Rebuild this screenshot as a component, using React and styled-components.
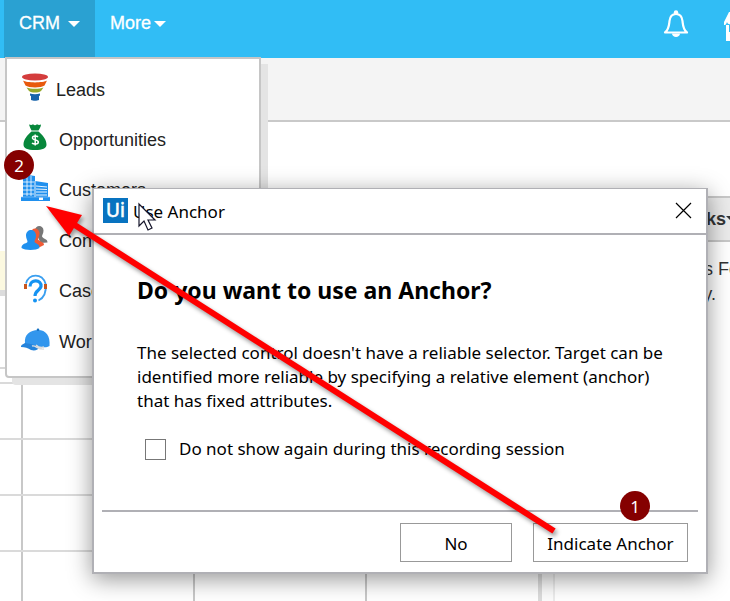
import React from "react";
import styled, { createGlobalStyle } from "styled-components";

const GlobalStyle = createGlobalStyle`
  * { box-sizing: border-box; }
  body {
    margin: 0;
    background: #fff;
    color: #222;
    font-family: "Liberation Sans", Arial, sans-serif;
    font-size: 18px;
  }
  button, input { font: inherit; color: inherit; margin: 0; }
`;

const Page = styled.div`
  position: relative;
  height: 100vh;
  overflow: hidden;
  display: flex;
  flex-direction: column;
`;

const TopBar = styled.header`
  flex: none;
  display: flex;
  height: 58px;
  padding-left: 4px;
  background: #31bdf5;
`;

const NavButton = styled.button`
  display: flex;
  align-items: center;
  gap: ${(p) => (p.$active ? 8 : 3)}px;
  height: 58px;
  padding: 0 15px 11px;
  border: 0;
  background: ${(p) => (p.$active ? "#2aa1d2" : "transparent")};
  color: #fff;
  -webkit-text-stroke: 0.3px #fff;
`;

const Caret = styled.span`
  border: 6px solid transparent;
  border-top-color: currentColor;
  border-bottom: 0;
`;

const TopIcons = styled.div`
  flex: none;
  display: flex;
  gap: 34px;
  margin-left: auto;
  margin-right: -22px;
  padding-top: 9px;
`;

const IconButton = styled.button`
  width: 28px;
  height: 32px;
  padding: 0;
  border: 0;
  background: none;
`;

const SubBar = styled.div`
  flex: none;
  height: 64px;
  border-bottom: 2px solid #c9c9c9;
  background: #f4f4f4;
`;

const Content = styled.main`
  flex: 1;
  display: flex;
  min-height: 0;
`;

const ListPane = styled.section`
  flex: 1;
  min-width: 0;
  overflow: hidden;
  padding-top: 129px;
`;

const Notice = styled.div`
  height: 45px;
  border-bottom: 6px solid #dcdcdc;
  background: #fcf9e0;
`;

const Grid = styled.table`
  width: 100%;
  margin-top: 71px;
  border-collapse: collapse;
  border-top: 2px solid #d8d8d8;
  table-layout: fixed;
`;

const GridRow = styled.tr`
  height: ${(p) => (p.$head ? 15 : 56)}px;
`;

const Cell = styled.td`
  width: ${(p) => (p.$first ? "22px" : "172px")};
  padding: 0;
  border-right: 2px solid #c8c8c8;
  border-bottom: 2px solid #dadada;
  &:last-child { width: auto; border-right: 0; }
`;

const Splitter = styled.div`
  flex: none;
  width: 17px;
  margin-top: 74px;
  background: #fcfcfc;
  border-left: 4px solid #dcdcdc;
  border-right: 2px solid #ececec;
`;

const SidePane = styled.aside`
  flex: none;
  width: 175px;
  padding-top: 74px;
  white-space: nowrap;
  overflow: hidden;
  color: #333;
`;

const SideHeader = styled.h2`
  display: flex;
  align-items: center;
  justify-content: flex-end;
  height: 46px;
  margin: 0 -8px 15px 0;
  border: 2px solid #c8c8c8;
  border-width: 2px 0;
  background: #ebebeb;
  font-size: 18px;
`;

const SideText = styled.p`
  display: flex;
  justify-content: flex-end;
  margin: 0 ${(p) => p.$inset}px 0 0;
  line-height: 25px;
`;

const Menu = styled.nav`
  position: absolute;
  left: 5px;
  top: 57px;
  width: 256px;
  padding: 6px 15px 9px 14px;
  border: 2px solid #c6c6c6;
  border-radius: 0 0 4px 4px;
  background: #fff;
  box-shadow: 7px 7px 0 #e4e4e4;
  display: grid;
`;

const MenuItem = styled.a`
  display: flex;
  align-items: center;
  gap: ${(p) => p.$gap}px;
  height: ${(p) => p.$height}px;
  color: #222;
  text-decoration: none;
  svg { flex: none; margin-bottom: 6px; }
`;

const Dialog = styled.section`
  position: absolute;
  left: 92px;
  right: 22px;
  top: 188px;
  border: 2px solid #b0b0b5;
  border-top-width: 1px;
  background: #fff;
  box-shadow: 0 5px 22px rgba(0, 0, 0, 0.42);
  color: #000;
  font-family: "Noto Sans", sans-serif;
  font-size: 17px;
`;

const TitleBar = styled.div`
  display: flex;
  align-items: center;
  gap: 5px;
  height: 46px;
  padding: 0 14px 2px 9px;
  border-bottom: 2px solid #b0b0b5;
`;

const Title = styled.span`
  flex: 1;
  padding-top: 2px;
`;

const CloseButton = styled.button`
  display: flex;
  padding: 0;
  border: 0;
  background: none;
`;

const DialogBody = styled.div`
  padding: 38px 32px 49px 43px;
`;

const Heading = styled.h1`
  margin: 0 0 34px;
  font-size: 23px;
  line-height: 34px;
`;

const Message = styled.p`
  margin: 0;
  line-height: 24px;
`;

const CheckLabel = styled.label`
  display: flex;
  align-items: center;
  gap: 13px;
  margin-top: 24px;
  padding-left: 8px;
  line-height: 24px;
`;

const CheckBox = styled.input`
  appearance: none;
  width: 21px;
  height: 21px;
  border: 1px solid #777;
  background: #fff;
`;

const Actions = styled.footer`
  display: flex;
  justify-content: flex-end;
  gap: 21px;
  margin: 0 8px;
  padding: 11px 10px 10px;
  border-top: 2px solid #b0b0b5;
`;

const ActionButton = styled.button`
  width: ${(p) => (p.$wide ? 155 : 112)}px;
  height: 39px;
  padding: 1px 0 0;
  border: 1px solid #999;
  background: #fff;
  white-space: nowrap;
`;

const Step = styled.span`
  position: absolute;
  left: ${(p) => p.$x}px;
  top: ${(p) => p.$y}px;
  display: grid;
  place-items: center;
  width: 30px;
  height: 30px;
  border-radius: 50%;
  background: #850000;
  color: #fff;
  font-family: "Noto Sans", sans-serif;
  font-size: 17px;
`;

const Arrow = styled.svg`
  position: absolute;
  left: 0;
  top: 0;
  pointer-events: none;
  filter: drop-shadow(2px 3px 2px rgba(0, 0, 0, 0.4));
`;

const Pointer = styled.svg`
  position: absolute;
  left: 137px;
  top: 202px;
`;

const FunnelIcon = () => (
  <svg width="28" height="28" viewBox="0 0 28 28">
    <ellipse cx="14" cy="4" rx="13" ry="3.4" fill="#d43d3d" />
    <path d="M2 7.500c4 2.500 20 2.500 24 0l-2.500 5c-3 2.500-16 2.500-19 0z" fill="#e8590c" />
    <path d="M5.500 14.500c4 1.800 13 1.800 17 0l-2.500 3.500c-3 2-9 2-12 0z" fill="#95a82b" />
    <path d="M9 20.500c3 1 7 1 10 0v2l-1 .5v4c-2 1-6 1-8 0v-4l-1-.5z" fill="#1864ab" />
  </svg>
);

const MoneyIcon = () => (
  <svg width="28" height="28" viewBox="0 0 28 28">
    <path d="M8 1.500c2 .8 3 .5 4-.2 1.500 1.200 2.500 1.200 4 0 1.400.8 2.500.8 4 .2-.2 2.300-1.200 4-2.500 6h-7C9.500 5.500 8.500 3.500 8 1.500zM10.500 8.500h7c4.500 3.500 8 8.500 8 13 0 4-4 5.500-11.500 5.500S2.500 25.500 2.500 21.500c0-4.500 3.500-9.500 8-13z" fill="#07873b" />
    <path d="M17 14c-1-1.200-5.500-1.500-5.500 1 0 2.500 5.800 1.500 5.800 4 0 2.700-5 2.300-6.300 1M14.200 11.500v11" fill="none" stroke="#fff" strokeWidth="1.500" />
  </svg>
);

const BuildingIcon = () => (
  <svg width="30" height="28" viewBox="0 0 30 28">
    <path d="M2 4l5-3 7 1v5l13 2v14h2v4H0v-4h2z" fill="#2090ee" />
    <path d="M2 8h11M2 12h11M2 16h11M2 20h11M6 3v19M10 2v20" stroke="#fff" strokeWidth="0.800" />
    <path d="M14 7v16M15 12l11 1M15 15l11 .5M15 18h11M15 21h11" stroke="#fff" strokeWidth="0.900" />
    <path d="M18 23.500h4v2.500h-4z" fill="#fff" />
    <path d="M0 23h29" stroke="#9acbf7" strokeWidth="0.600" />
  </svg>
);

const PeopleIcon = () => (
  <svg width="30" height="28" viewBox="0 0 30 28">
    <path d="M14 6.500C14 .5 22.500 .5 22.500 6.500c0 3-1.500 4-1.500 6 2 3 5.500 2 5.500 6l-7 .5z" fill="#777" />
    <path d="M10 9c0-6 8-6 8.500 0 0 3-1.500 4.500-1.500 6.500 2 2.500 6 2 6 5.500l-4 2h-6z" fill="#f05a35" />
    <path d="M5 11.500c0-7.500 10-7.500 10 0 0 3-1.500 4.500-1.500 6.500 2 2.200 5 1.700 5 6-3 2.500-15 2.500-18 0 0-4.500 4-4 6-6 0-2-1.500-3.500-1.500-6.500z" fill="#2090ee" />
  </svg>
);

const SupportIcon = () => (
  <svg width="28" height="30" viewBox="0 0 28 30" fill="none">
    <path d="M5 9.500C8-1 21-1 24.500 9.500c1 8-1 14-7 17" stroke="#3a9ff0" strokeWidth="1.800" />
    <path d="M9 12.500c0-8 12-7 11 0-1 4-6 4-6 9.500" stroke="#1593f2" strokeWidth="3.200" />
    <circle cx="14" cy="26.500" r="2" fill="#1593f2" />
    <path d="M4.500 10v5M24.500 10v5" stroke="#c8551d" strokeWidth="3" />
  </svg>
);

const CapIcon = () => (
  <svg width="30" height="26" viewBox="0 0 30 26">
    <path d="M4 17C3 9 9 4 17 4s12.500 6 11.500 16c-3 2-6 1-11 1L4 20z" fill="#3296ed" />
    <path d="M0 20c1-2 3-2 4-3 7 1 11 2 15 4-2 3-5 4-9 3-3-2-6-3-10-3z" fill="#2483db" />
    <circle cx="17" cy="3.800" r="1.300" fill="#1671c2" />
    <path d="M11 20c4-1 6 4 12 3M15 19c2 2 5 3 8 2" stroke="#ddd" strokeWidth="1.400" fill="none" />
  </svg>
);

const BellIcon = () => (
  <svg width="28" height="30" viewBox="0 0 28 30">
    <path d="M3 23.500c4-3 4-7 4.500-11.500C8 7 11 5 14 5s6 2 6.500 7c.5 4.500.5 8.500 4.500 11.500z" fill="none" stroke="#fff" strokeWidth="2.200" strokeLinejoin="round" />
    <path d="M10 24.500h8c0 4.500-8 4.500-8 0z" fill="#fff" />
    <circle cx="14" cy="3.400" r="2.200" fill="#fff" />
  </svg>
);

const HomeIcon = () => (
  <svg width="28" height="34" viewBox="0 0 28 34" fill="#fff">
    <path d="M0 13L5 3h18l5 10c-1 3-4 3-5 0-1 3-4 3-5 0-1 3-4 3-5 0-1 3-4 3-5 0-1 3-4 3-5 0-1 3-2 3-3 3z" />
    <path d="M2 16h3v7h18v-7h3v16H2z" />
  </svg>
);

const menuItems = [
  { label: "Leads", icon: <FunnelIcon />, gap: 7, height: 50 },
  { label: "Opportunities", icon: <MoneyIcon />, gap: 10, height: 50 },
  { label: "Customers", icon: <BuildingIcon />, gap: 8, height: 51 },
  { label: "Contacts", icon: <PeopleIcon />, gap: 8, height: 50 },
  { label: "Cases", icon: <SupportIcon />, gap: 10, height: 51 },
  { label: "Workers", icon: <CapIcon />, gap: 8, height: 50 },
];

export default function App() {
  return (
    <Page>
      <GlobalStyle />
      <TopBar>
        <NavButton $active>CRM <Caret /></NavButton>
        <NavButton>More <Caret /></NavButton>
        <TopIcons>
          <IconButton aria-label="Notifications"><BellIcon /></IconButton>
          <IconButton aria-label="Home"><HomeIcon /></IconButton>
        </TopIcons>
      </TopBar>
      <SubBar />
      <Content>
        <ListPane>
          <Notice />
          <Grid>
            <tbody>
              {[0, 1, 2, 3, 4].map((row) => (
                <GridRow key={row} $head={row === 0}>
                  <Cell $first /><Cell /><Cell /><Cell />
                </GridRow>
              ))}
            </tbody>
          </Grid>
        </ListPane>
        <Splitter />
        <SidePane>
          <SideHeader>ks<Caret /></SideHeader>
          <SideText $inset={-9}>s Fo</SideText>
          <SideText $inset={14}>y.</SideText>
        </SidePane>
      </Content>

      <Menu aria-label="CRM">
        {menuItems.map(({ label, icon, gap, height }) => (
          <MenuItem key={label} href="#" $gap={gap} $height={height}>{icon}{label}</MenuItem>
        ))}
      </Menu>

      <Dialog role="dialog" aria-label="Use Anchor">
        <TitleBar>
          <svg width="25" height="25" viewBox="0 0 25 25">
            <rect width="25" height="25" fill="#0873c0" />
            <text x="3" y="19" fill="#fff" stroke="#fff" strokeWidth="0.600" fontFamily="Noto Sans" fontSize="19">Ui</text>
          </svg>
          <Title>Use Anchor</Title>
          <CloseButton aria-label="Close">
            <svg width="17" height="17" viewBox="0 0 17 17">
              <path d="M1 1l15 15M16 1L1 16" stroke="#000" strokeWidth="1.200" />
            </svg>
          </CloseButton>
        </TitleBar>
        <DialogBody>
          <Heading>Do you want to use an Anchor?</Heading>
          <Message>
            The selected control doesn't have a reliable selector. Target can be<br />
            identified more reliable by specifying a relative element (anchor)<br />
            that has fixed attributes.
          </Message>
          <CheckLabel>
            <CheckBox type="checkbox" />
            Do not show again during this recording session
          </CheckLabel>
        </DialogBody>
        <Actions>
          <ActionButton>No</ActionButton>
          <ActionButton $wide>Indicate Anchor</ActionButton>
        </Actions>
      </Dialog>

      <Pointer width="22" height="30" viewBox="0 0 22 30">
        <path d="M2 2v22l5-5 4 9 4-2-4-8h7z" fill="#fff" stroke="#15152a" strokeWidth="1.200" />
      </Pointer>
      <Arrow width="600" height="560" viewBox="0 0 600 560">
        <path d="M554 531L70 222" stroke="#f00" strokeWidth="6" />
        <path d="M46 206l36 9-13 21z" fill="#f00" />
      </Arrow>
      <Step $x={4} $y={150}>2</Step>
      <Step $x={620} $y={491}>1</Step>
    </Page>
  );
}
